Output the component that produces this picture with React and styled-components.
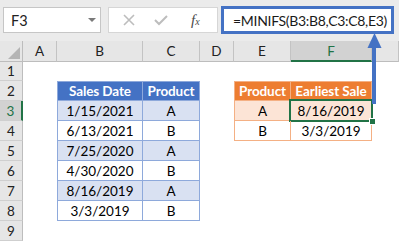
import React from 'react';
import styled, { createGlobalStyle } from 'styled-components';

const GlobalStyle = createGlobalStyle`
  html, body {
    margin: 0;
    padding: 0;
    background: #ffffff;
  }
  body {
    font-family: Lato, "Open Sans", sans-serif;
  }
`;

const Window = styled.div`
  position: relative;
  width: 399px;
  height: 241px;
  overflow: hidden;
  background: #ffffff;
`;

// barre de formule
const FormulaBar = styled.div`
  display: flex;
  align-items: flex-start;
  height: 41px;
  box-sizing: border-box;
  padding: 7px 0 0 3px;
  background: #ebebeb;
`;

const NameBox = styled.div`
  display: flex;
  align-items: center;
  justify-content: space-between;
  box-sizing: border-box;
  width: 98px;
  height: 26px;
  padding: 0 4px 0 7px;
  background: #ffffff;
  border: 1px solid #c6c6c6;
  font-size: 14.5px;
  color: #222;
`;

const DropArrow = styled.span`
  width: 0;
  height: 0;
  border-left: 4px solid transparent;
  border-right: 4px solid transparent;
  border-top: 4px solid #7a7a7a;
`;

const FxBox = styled.div`
  display: flex;
  align-items: center;
  box-sizing: border-box;
  width: 110px;
  height: 26px;
  margin-left: 7px;
  padding-left: 14px;
  gap: 19px;
  background: #ffffff;
  border: 1px solid #d6d6d6;
`;

const FxLabel = styled.span`
  margin-left: 4px;
  font-family: "Liberation Serif", serif;
  font-style: italic;
  font-size: 15px;
  color: #4a4a4a;
  sub {
    font-size: 10px;
    vertical-align: baseline;
  }
`;

const FormulaInput = styled.div`
  display: flex;
  align-items: center;
  box-sizing: border-box;
  width: 173px;
  height: 28px;
  margin: -1px 0 0 3px;
  padding-left: 9px;
  background: #ffffff;
  border: 3px solid #4472c4;
  font-size: 14px;
  letter-spacing: -0.3px;
  color: #1a1a1a;
  white-space: nowrap;
`;

// feuille
const Sheet = styled.div`
  display: grid;
  grid-template-columns: 23px 34px 86px 57px 34px 57px 81px 1fr;
  grid-template-rows: 21px 19px repeat(8, 20px);
  font-size: 13.5px;
`;

const Corner = styled.div`
  position: relative;
  background: #e6e6e6;
  border-right: 1px solid #bdbdbd;
  border-bottom: 1px solid #bdbdbd;
  &::after {
    content: '';
    position: absolute;
    right: 2px;
    bottom: 2px;
    width: 0;
    height: 0;
    border-left: 12px solid transparent;
    border-bottom: 12px solid #b4b4b4;
  }
`;

const ColHead = styled.div`
  display: flex;
  align-items: center;
  justify-content: center;
  box-sizing: border-box;
  background: ${p => (p.$selected ? '#d2d2d2' : '#e6e6e6')};
  border-right: 1px solid #c3c3c3;
  border-bottom: ${p => (p.$selected ? '2px solid #217346' : '1px solid #bdbdbd')};
  color: ${p => (p.$selected ? '#217346' : '#222')};
  font-size: 13.5px;
`;

const RowHead = styled.div`
  display: flex;
  align-items: center;
  justify-content: center;
  box-sizing: border-box;
  background: ${p => (p.$selected ? '#d2d2d2' : '#e6e6e6')};
  border-right: ${p => (p.$selected ? '2px solid #217346' : '1px solid #bdbdbd')};
  border-bottom: 1px solid #cfcfcf;
  color: ${p => (p.$selected ? '#217346' : '#222')};
  font-size: 13.5px;
`;

const palettes = {
  blue: { head: '#4472c4', band: '#d9e1f2', line: '#8ea9db' },
  orange: { head: '#ed7d31', band: '#fce4d6', line: '#f4b084' },
};

const Cell = styled.div`
  position: relative;
  display: flex;
  align-items: center;
  justify-content: center;
  box-sizing: border-box;
  color: #000;
  white-space: nowrap;
  ${p => p.$table && `
    border-right: 1px solid ${palettes[p.$table].line};
    border-bottom: 1px solid ${palettes[p.$table].line};
    ${p.$first ? `border-left: 1px solid ${palettes[p.$table].line};` : ''}
    ${p.$top ? `border-top: 1px solid ${palettes[p.$table].line};` : ''}
  `}
  ${p => p.$head && `
    background: ${palettes[p.$table].head};
    color: #ffffff;
    font-weight: 700;
    letter-spacing: -0.1px;
  `}
  ${p => p.$band && `background: ${palettes[p.$table].band};`}
  ${p => p.$selected && `
    &::after {
      content: '';
      position: absolute;
      top: -2px;
      left: -2px;
      right: -2px;
      bottom: -2px;
      border: 2px solid #217346;
    }
    &::before {
      content: '';
      position: absolute;
      right: -5px;
      bottom: -5px;
      width: 5px;
      height: 5px;
      background: #217346;
      border: 1px solid #ffffff;
      z-index: 1;
    }
  `}
`;

const Arrow = styled.svg`
  position: absolute;
  left: 366px;
  top: 33px;
`;

const columns = ['A', 'B', 'C', 'D', 'E', 'F', ''];

const sales = [
  ['1/15/2021', 'A'],
  ['6/13/2021', 'B'],
  ['7/25/2020', 'A'],
  ['4/30/2020', 'B'],
  ['8/16/2019', 'A'],
  ['3/3/2019', 'B'],
];

const earliest = [
  ['A', '8/16/2019'],
  ['B', '3/3/2019'],
];

const SheetRow = ({ n }) => {
  // row 2 = en-têtes, rows 3..8 = données
  const s = n >= 3 ? sales[n - 3] : null;
  const e = n >= 3 && n <= 4 ? earliest[n - 3] : null;
  const band = n % 2 === 1;

  return (
    <>
      <RowHead $selected={n === 3}>{n}</RowHead>
      <Cell />
      {n === 2 && (
        <>
          <Cell $table="blue" $head $first $top>Sales Date</Cell>
          <Cell $table="blue" $head $top>Product</Cell>
        </>
      )}
      {s && (
        <>
          <Cell $table="blue" $band={band} $first>{s[0]}</Cell>
          <Cell $table="blue" $band={band}>{s[1]}</Cell>
        </>
      )}
      {!s && n !== 2 && (
        <>
          <Cell />
          <Cell />
        </>
      )}
      <Cell />
      {n === 2 && (
        <>
          <Cell $table="orange" $head $first $top>Product</Cell>
          <Cell $table="orange" $head $top>Earliest Sale</Cell>
        </>
      )}
      {e && (
        <>
          <Cell $table="orange" $band={band} $first>{e[0]}</Cell>
          <Cell $table="orange" $band={band} $selected={n === 3}>{e[1]}</Cell>
        </>
      )}
      {!e && n !== 2 && (
        <>
          <Cell />
          <Cell />
        </>
      )}
      <Cell />
    </>
  );
};

const App = () => (
  <Window>
    <GlobalStyle />
    <FormulaBar>
      <NameBox>
        F3
        <DropArrow />
      </NameBox>
      <FxBox>
        <svg width="12" height="12" viewBox="0 0 12 12">
          <path d="M1 1 L11 11 M11 1 L1 11" stroke="#bdbdbd" strokeWidth="1.6" fill="none" />
        </svg>
        <svg width="14" height="12" viewBox="0 0 14 12">
          <path d="M1 6 L5 10 L13 2" stroke="#bdbdbd" strokeWidth="2" fill="none" />
        </svg>
        <FxLabel>f<sub>x</sub></FxLabel>
      </FxBox>
      <FormulaInput>=MINIFS(B3:B8,C3:C8,E3)</FormulaInput>
    </FormulaBar>

    <Sheet>
      <Corner />
      {columns.map((c, i) => (
        <ColHead key={i} $selected={c === 'F'}>{c}</ColHead>
      ))}
      {[1, 2, 3, 4, 5, 6, 7, 8, 9].map(n => (
        <SheetRow key={n} n={n} />
      ))}
    </Sheet>

    <Arrow width="18" height="72" viewBox="0 0 18 72">
      <rect x="6" y="13" width="4" height="58" fill="#4472c4" />
      <polygon points="8.5,0 1.5,15 15.5,15" fill="#4472c4" />
    </Arrow>
  </Window>
);

export default App;
